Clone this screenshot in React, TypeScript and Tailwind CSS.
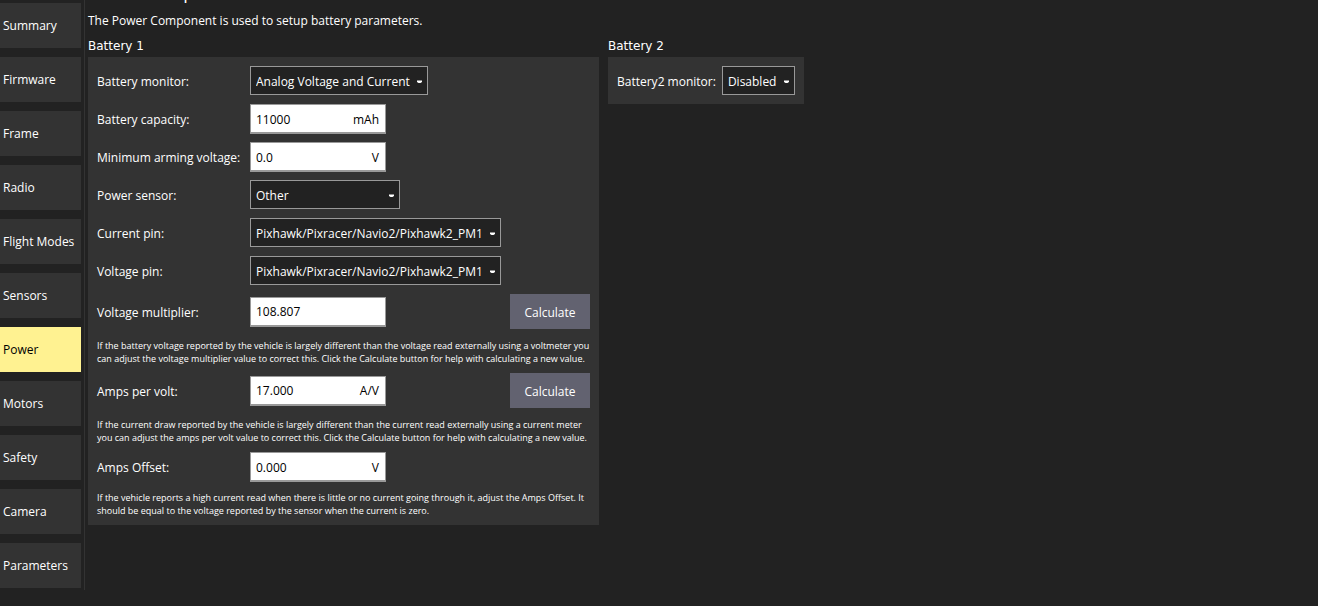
import React, { useId } from "react";

const sections = [
  "Summary",
  "Firmware",
  "Frame",
  "Radio",
  "Flight Modes",
  "Sensors",
  "Power",
  "Motors",
  "Safety",
  "Camera",
  "Parameters",
];

function Sidebar() {
  return (
    <nav className="flex w-[85px] shrink-0 flex-col gap-[9px] self-start border-r border-[#333333] pt-[3px] pr-[3px] pb-[2px]">
      {sections.map((name) => (
        <button
          key={name}
          type="button"
          className={
            name === "Power"
              ? "h-[45px] bg-[#fff291] pl-[3px] text-left whitespace-nowrap text-black"
              : "h-[45px] bg-[#333333] pl-[3px] text-left whitespace-nowrap text-white"
          }
        >
          {name}
        </button>
      ))}
    </nav>
  );
}

function Select({ id, value, width }: { id: string; value: string; width: string }) {
  return (
    <div className={`grid pb-[1px] ${width}`}>
      <select
        id={id}
        className="col-start-1 row-start-1 h-[29px] w-full appearance-none border border-[#999999] bg-[#222222] pt-[1px] pl-[5px] text-white"
      >
        <option>{value}</option>
      </select>
      <svg
        className="pointer-events-none col-start-1 row-start-1 mt-[3px] mr-[5px] self-center justify-self-end"
        width="6"
        height="4"
        viewBox="0 0 6 4"
        aria-hidden="true"
      >
        <path d="M0 0.5H5V2L3.5 3H1.5L0 2Z" fill="#ffffff" />
      </svg>
    </div>
  );
}

function NumberField({ id, value, unit }: { id: string; value: string; unit?: string }) {
  return (
    <div className="flex h-[30px] w-[136px] items-center border border-b-2 border-[#999999] bg-white pt-[1px] pr-[6px] pl-[5px] text-black">
      <input id={id} defaultValue={value} className="w-0 grow bg-transparent outline-none" />
      {unit && <span>{unit}</span>}
    </div>
  );
}

function Row({
  label,
  height = "h-[38px]",
  children,
  action,
}: {
  label: string;
  height?: string;
  children: (id: string) => React.ReactNode;
  action?: boolean;
}) {
  const id = useId();
  return (
    <div className={`flex items-center ${height}`}>
      <label htmlFor={id} className="w-[153px] shrink-0 pt-[1px] whitespace-nowrap">
        {label}
      </label>
      {children(id)}
      {action && (
        <button type="button" className="ml-auto h-[35px] w-[80px] bg-[#626270] pt-[1px] text-white">
          Calculate
        </button>
      )}
    </div>
  );
}

function Note({ children }: { children: React.ReactNode }) {
  return <p className="text-[9px] leading-[13px] whitespace-pre">{children}</p>;
}

export default function App() {
  const battery2 = useId();
  return (
    <div className="min-h-screen bg-[#222222] font-['Open_Sans',sans-serif] text-[12px] leading-[17px] text-white">
      <div className="flex">
        <Sidebar />
        <main className="flex min-w-0 grow flex-col pl-[3px]">
          <header className="flex h-[12px] flex-col justify-end overflow-hidden">
            <h1 className="h-[32px] shrink-0 text-[18px] leading-[24px]">Power Setup</h1>
          </header>
          <p>The Power Component is used to setup battery parameters.</p>
          <div className="flex items-start gap-[9px] pt-[8px]">
            <section className="w-[511px] shrink-0">
              <h2 className="h-[20px] font-['DejaVu_Sans',sans-serif] leading-[19px]">Battery 1</h2>
              <div className="bg-[#333333] px-[9px] pt-[5px] pb-[8px]">
                <Row label="Battery monitor:">
                  {(id) => <Select id={id} value="Analog Voltage and Current" width="w-[178px]" />}
                </Row>
                <Row label="Battery capacity:">
                  {(id) => <NumberField id={id} value="11000" unit="mAh" />}
                </Row>
                <Row label="Minimum arming voltage:">
                  {(id) => <NumberField id={id} value="0.0" unit="V" />}
                </Row>
                <Row label="Power sensor:">
                  {(id) => <Select id={id} value="Other" width="w-[150px]" />}
                </Row>
                <Row label="Current pin:">
                  {(id) => (
                    <Select id={id} value="Pixhawk/Pixracer/Navio2/Pixhawk2_PM1" width="w-[251px]" />
                  )}
                </Row>
                <Row label="Voltage pin:">
                  {(id) => (
                    <Select id={id} value="Pixhawk/Pixracer/Navio2/Pixhawk2_PM1" width="w-[251px]" />
                  )}
                </Row>
                <Row label="Voltage multiplier:" height="h-[43px]" action>
                  {(id) => <NumberField id={id} value="108.807" />}
                </Row>
                <div className="pt-[6px] pb-[4px]">
                  <Note>
                    {"If the battery voltage reported by the vehicle is largely different than the voltage read externally using a voltmeter you\ncan adjust the voltage multiplier value to correct this. Click the Calculate button for help with calculating a new value."}
                  </Note>
                </div>
                <Row label="Amps per volt:" height="h-[43px]" action>
                  {(id) => <NumberField id={id} value="17.000" unit="A/V" />}
                </Row>
                <div className="pt-[6px] pb-[4px]">
                  <Note>
                    {"If the current draw reported by the vehicle is largely different than the current read externally using a current meter\nyou can adjust the amps per volt value to correct this. Click the Calculate button for help with calculating a new value."}
                  </Note>
                </div>
                <Row label="Amps Offset:">
                  {(id) => <NumberField id={id} value="0.000" unit="V" />}
                </Row>
                <div className="pt-[5px]">
                  <Note>
                    {"If the vehicle reports a high current read when there is little or no current going through it, adjust the Amps Offset. It\nshould be equal to the voltage reported by the sensor when the current is zero."}
                  </Note>
                </div>
              </div>
            </section>
            <section>
              <h2 className="h-[20px] font-['DejaVu_Sans',sans-serif] leading-[19px]">Battery 2</h2>
              <div className="flex items-center gap-[6px] bg-[#333333] px-[9px] pt-[9px] pb-[8px]">
                <label htmlFor={battery2} className="pt-[1px] whitespace-nowrap">
                  Battery2 monitor:
                </label>
                <Select id={battery2} value="Disabled" width="w-[73px]" />
              </div>
            </section>
          </div>
        </main>
      </div>
    </div>
  );
}
